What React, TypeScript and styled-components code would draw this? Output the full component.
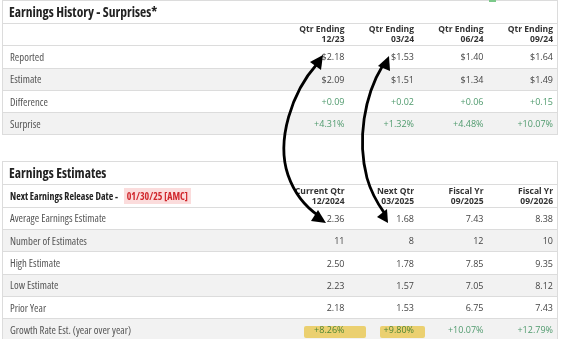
import React from 'react';
import styled, { createGlobalStyle } from 'styled-components';

const GlobalStyle = createGlobalStyle`
  html, body {
    margin: 0;
    padding: 0;
    background: #fff;
  }
  body {
    font-family: "Open Sans", "Noto Sans", "Liberation Sans", sans-serif;
    color: #444;
  }
`;

const Page = styled.div`
  position: relative;
  width: 561px;
  height: 339px;
  overflow: hidden;
  padding: 0 3px 0 2px;
  box-sizing: border-box;
  display: flex;
  flex-direction: column;
  gap: 26px;
`;

const Panel = styled.section`
  border: 1px solid #dcdcdc;
  background: #fff;
`;

const PanelTitle = styled.h2`
  margin: 0;
  height: 22px;
  padding: 0 6px;
  display: flex;
  align-items: center;
  font-size: 13.5px;
  font-weight: 700;
  color: #222;
  border-bottom: 1px solid #dcdcdc;
  font-stretch: 75%;
`;

const Row = styled.div<{ $shade?: boolean }>`
  display: grid;
  grid-template-columns: 1fr repeat(4, 69.5px);
  height: 21.3px;
  align-items: center;
  background: ${p => (p.$shade ? '#f2f2f2' : '#fff')};
  border-bottom: 1px solid #dcdcdc;

  &:last-child {
    border-bottom: none;
  }
`;

const Label = styled.div<{ $bold?: boolean }>`
  padding-left: 7px;
  font-size: ${p => (p.$bold ? '9.9px' : '10.7px')};
  font-weight: ${p => (p.$bold ? 700 : 400)};
  font-stretch: 75%;
  color: ${p => (p.$bold ? '#222' : '#555')};
  white-space: nowrap;
`;

const HeadCell = styled.div`
  align-self: end;
  padding: 0 4px 1px 0;
  text-align: right;
  font-size: 8.5px;
  line-height: 10px;
  font-weight: 700;
  color: #333;
  white-space: nowrap;
`;

const Cell = styled.div<{ $up?: boolean }>`
  position: relative;
  padding-right: 4px;
  text-align: right;
  font-size: 9px;
  color: ${p => (p.$up ? '#4f9a6d' : '#444')};
  white-space: nowrap;
`;

const Marker = styled.span<{ $left: number; $width: number }>`
  position: absolute;
  top: 3px;
  left: ${p => p.$left}px;
  width: ${p => p.$width}px;
  height: 12px;
  background: rgba(245, 205, 60, 0.7);
  border-radius: 2px;
  mix-blend-mode: multiply;
`;

const DateTag = styled.span`
  margin-left: 4px;
  padding: 1px 3px;
  background: #fbdcdc;
  color: #d0262c;
  font-weight: 700;
`;

const GreenNub = styled.span`
  position: absolute;
  top: 0;
  left: 489px;
  width: 7px;
  height: 2px;
  background: #7cc98a;
`;

const ArrowLayer = styled.svg`
  position: absolute;
  inset: 0;
  pointer-events: none;
`;

type Line = { label: string; values: string[]; up?: boolean };

const history: Line[] = [
  { label: 'Reported', values: ['$2.18', '$1.53', '$1.40', '$1.64'] },
  { label: 'Estimate', values: ['$2.09', '$1.51', '$1.34', '$1.49'] },
  { label: 'Difference', values: ['+0.09', '+0.02', '+0.06', '+0.15'], up: true },
  { label: 'Surprise', values: ['+4.31%', '+1.32%', '+4.48%', '+10.07%'], up: true },
];

const estimates: Line[] = [
  { label: 'Average Earnings Estimate', values: ['2.36', '1.68', '7.43', '8.38'] },
  { label: 'Number of Estimates', values: ['11', '8', '12', '10'] },
  { label: 'High Estimate', values: ['2.50', '1.78', '7.85', '9.35'] },
  { label: 'Low Estimate', values: ['2.23', '1.57', '7.05', '8.12'] },
  { label: 'Prior Year', values: ['2.18', '1.53', '6.75', '7.43'] },
];

const historyHeads = [['Qtr Ending', '12/23'], ['Qtr Ending', '03/24'], ['Qtr Ending', '06/24'], ['Qtr Ending', '09/24']];
const estimateHeads = [['Current Qtr', '12/2024'], ['Next Qtr', '03/2025'], ['Fiscal Yr', '09/2025'], ['Fiscal Yr', '09/2026']];

const Heads = ({ heads }: { heads: string[][] }) => (
  <>
    {heads.map(([a, b], i) => (
      <HeadCell key={i}>
        {a}
        <br />
        {b}
      </HeadCell>
    ))}
  </>
);

const Arrow = ({ d, tip, tail }: { d: string; tip: string; tail: string }) => (
  <>
    <path d={d} fill="none" stroke="#000" strokeWidth={2.8} strokeLinecap="round" />
    <polygon points={tip} fill="#000" />
    <polygon points={tail} fill="#000" />
  </>
);

export default function App() {
  return (
    <>
      <GlobalStyle />
      <Page>
        <GreenNub />
        <Panel>
          <PanelTitle>Earnings History - Surprises*</PanelTitle>
          <Row>
            <Label />
            <Heads heads={historyHeads} />
          </Row>
          {history.map((r, i) => (
            <Row key={r.label} $shade={i % 2 === 1}>
              <Label>{r.label}</Label>
              {r.values.map(v => (
                <Cell key={v} $up={r.up}>{v}</Cell>
              ))}
            </Row>
          ))}
        </Panel>

        <Panel>
          <PanelTitle>Earnings Estimates</PanelTitle>
          <Row>
            <Label $bold>
              Next Earnings Release Date - <DateTag>01/30/25 [AMC]</DateTag>
            </Label>
            <Heads heads={estimateHeads} />
          </Row>
          {estimates.map((r, i) => (
            <Row key={r.label} $shade={i % 2 === 1}>
              <Label>{r.label}</Label>
              {r.values.map((v, j) => (
                <Cell key={j}>{v}</Cell>
              ))}
            </Row>
          ))}
          <Row $shade>
            <Label>Growth Rate Est. (year over year)</Label>
            <Cell $up>
              +8.26%
              <Marker $left={25} $width={62} />
            </Cell>
            <Cell $up>
              +9.80%
              <Marker $left={31} $width={45} />
            </Cell>
            <Cell $up>+10.07%</Cell>
            <Cell $up>+12.79%</Cell>
          </Row>
        </Panel>

        <ArrowLayer width={561} height={339} viewBox="0 0 561 339">
          <Arrow
            d="M317 64 C 292 92, 276 140, 288 175 C 296 198, 310 210, 319 216"
            tip="323,55 321,70 310,62"
            tail="326,223 311,221 318,210"
          />
          <Arrow
            d="M383 65 C 364 96, 357 140, 367 178 C 372 196, 380 207, 385 214"
            tip="389,56 390,71 378,66"
            tail="388,223 377,217 387,209"
          />
        </ArrowLayer>
      </Page>
    </>
  );
}
